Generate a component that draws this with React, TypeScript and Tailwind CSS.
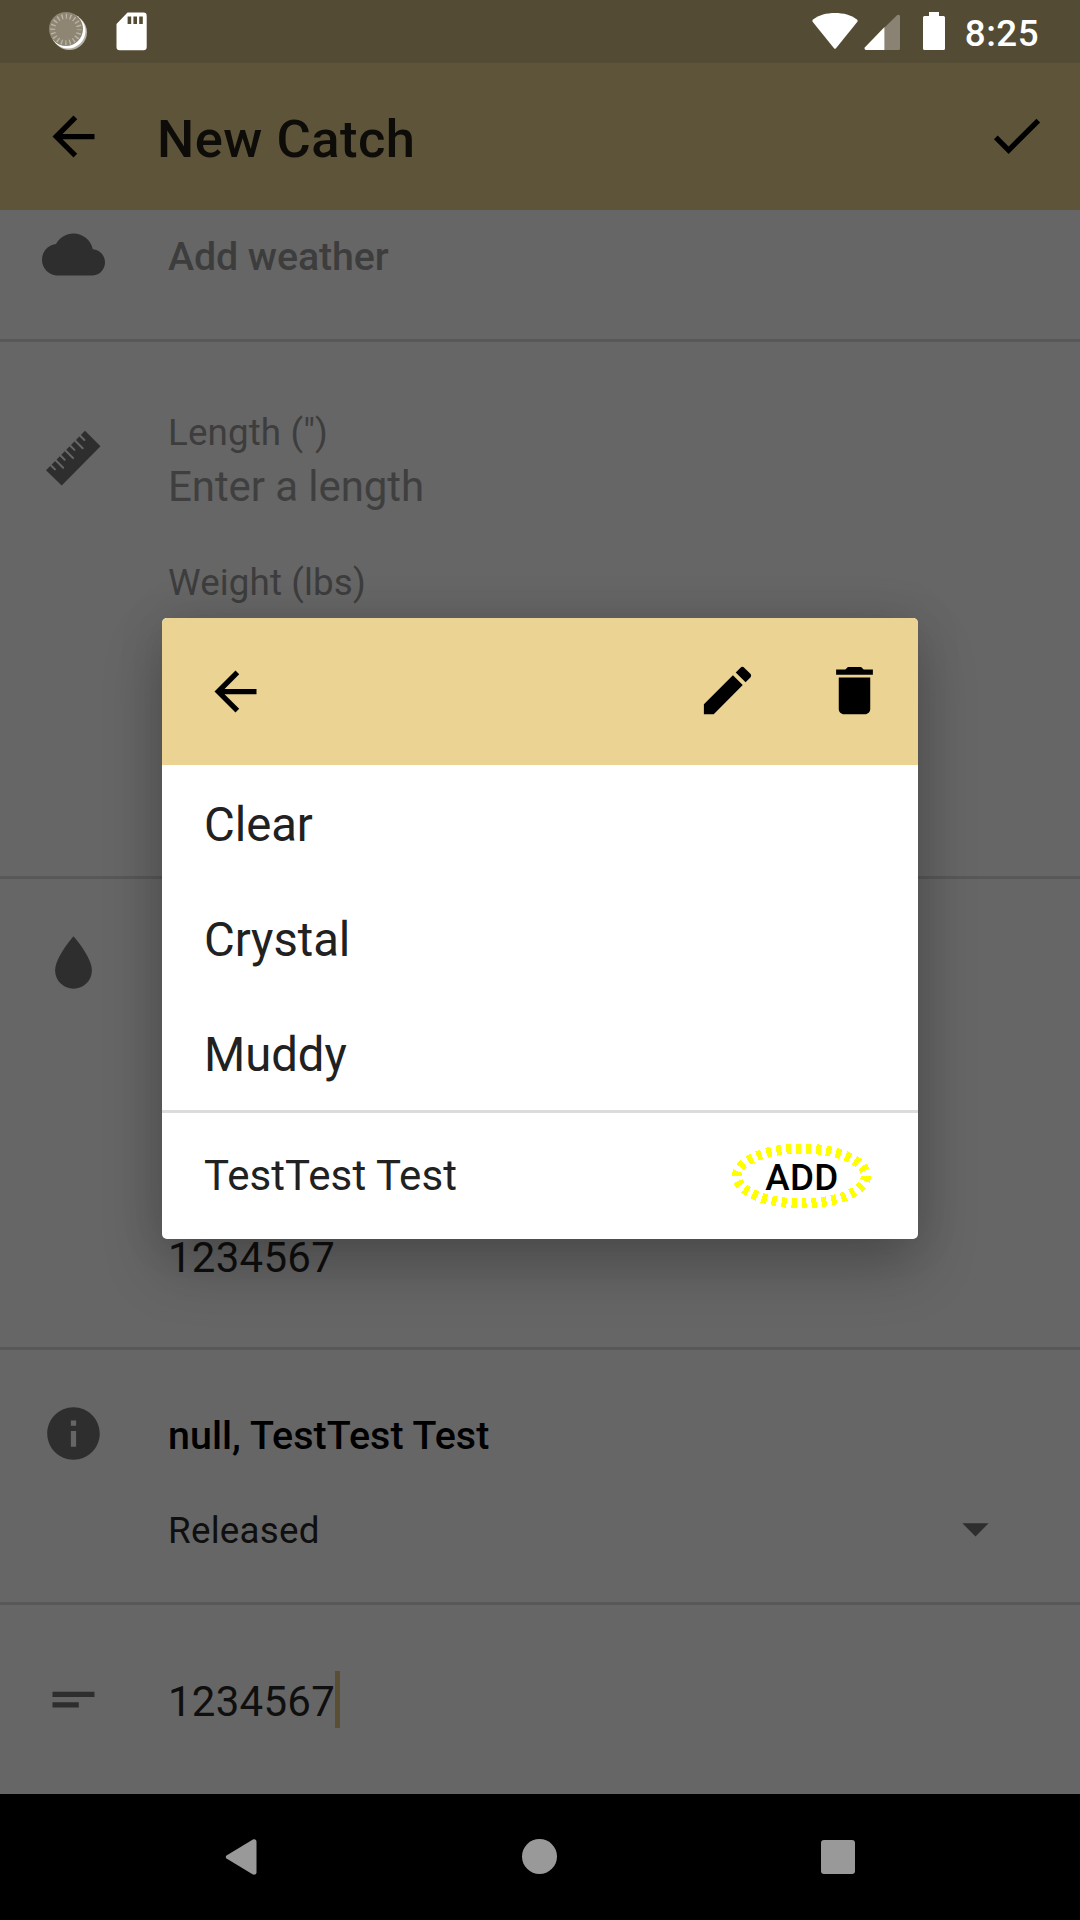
import React from "react";

type IconProps = { d: string; className?: string };

function Icon({ d, className = "" }: IconProps) {
  return (
    <svg viewBox="0 0 24 24" className={`block h-[63px] w-[63px] shrink-0 fill-current ${className}`}>
      <path d={d} />
    </svg>
  );
}

const BACK = "M20 11H7.83l5.59-5.59L12 4l-8 8 8 8 1.41-1.41L7.83 13H20v-2z";
const CHECK = "M9 16.17L4.83 12l-1.42 1.41L9 19 21 7l-1.41-1.41z";
const CLOUD =
  "M19.35 10.04C18.67 6.59 15.64 4 12 4 9.11 4 6.6 5.64 5.35 8.04 2.34 8.36 0 10.91 0 14c0 3.31 2.69 6 6 6h13c2.76 0 5-2.24 5-5 0-2.64-2.05-4.78-4.65-4.96z";
const DROP = "M12 2C12 2 5 9.9 5 15a7 7 0 0 0 14 0C19 9.9 12 2 12 2z";
const INFO = "M12 2C6.48 2 2 6.48 2 12s4.48 10 10 10 10-4.48 10-10S17.52 2 12 2zm1 15h-2v-6h2v6zm0-8h-2V7h2v2z";
const CARET = "M7 10l5 5 5-5z";
const NOTES = "M4 9h16v2H4V9zm0 4h10v2H4v-2z";
const PENCIL =
  "M3 17.25V21h3.75L17.81 9.94l-3.75-3.75L3 17.25zM20.71 7.04c.39-.39.39-1.02 0-1.41l-2.34-2.34c-.39-.39-1.02-.39-1.41 0l-1.83 1.83 3.75 3.75 1.83-1.83z";
const TRASH = "M6 19c0 1.1.9 2 2 2h8c1.1 0 2-.9 2-2V7H6v12zM19 4h-3.5l-1-1h-5l-1 1H5v2h14V4z";

function RulerIcon({ className = "" }: { className?: string }) {
  return (
    <svg viewBox="0 0 63 63" className={`block h-[63px] w-[63px] ${className}`}>
      <path d="M4 44.300L19.700 59.500 58.500 20.300 43 4.700z" fill="currentColor" />
      <path
        d="M7.800 38.200l5.200 5.200M12.700 33.300l8.500 8.500M17.500 28.500l5.200 5.200M22.500 23.500l8.500 8.500M27.300 18.700l5.200 5.200M32.200 13.800l8.500 8.500M37.200 8.800l5.200 5.200"
        fill="none"
        stroke="#666"
        strokeWidth="2"
        strokeLinecap="round"
      />
    </svg>
  );
}

function StatusBar() {
  return (
    <div className="flex h-[63px] items-start bg-[#544b34] text-white">
      <svg viewBox="0 0 40 40" className="ml-[48px] mt-[11px] h-[40px] w-[40px]">
        <circle cx="21.3" cy="21.3" r="17.700" fill="#b5b0a4" />
        <circle cx="20" cy="20" r="17.500" fill="#fff" />
        <circle cx="18" cy="18" r="17" fill="#8e8673" />
        <circle cx="18" cy="18.500" r="13.200" fill="none" stroke="#bab5a8" strokeWidth="5" strokeDasharray="1.3 2.847" strokeDashoffset="0.65" />
      </svg>
      <svg viewBox="0 0 31 39" className="ml-[28px] mt-[12px] h-[39px] w-[31px] fill-white">
        <path
          fillRule="evenodd"
          d="M11.5 .5H27.5a3.2 3.2 0 0 1 3.2 3.2V35a3.2 3.2 0 0 1-3.2 3.2H3.7A3.2 3.2 0 0 1 .5 35V12zM11.6 4.400v7.600h3.600V4.400zm5.800 0v7.600h3.600V4.400zm5.800 0v7.600h3.600V4.400z"
        />
      </svg>
      <div className="flex-1" />
      <svg viewBox="0 0 46 38" className="mt-[12px] h-[38px] w-[46px] fill-white">
        <path d="M1 7.5C7 3 14.500 1 23 1s16 2 22 6.500c.8.800.8 1.700.2 2.600L24 36.300c-.6.700-1.400.7-2 0L.8 10.100C.2 9.200.2 8.300 1 7.500z" />
      </svg>
      <svg viewBox="0 0 36 36" className="ml-[6px] mt-[14px] h-[36px] w-[36px]">
        <path d="M20.500 13.500L33 1.300c1.200-1 3-.5 3 1.200V34.500q0 1.500-1.500 1.500h-14z" fill="#8a8373" />
        <path d="M20.500 13v23H2C.6 36 0 34.300 1 33.200z" fill="#fff" />
      </svg>
      <svg viewBox="0 0 22 38" className="ml-[23px] mt-[12px] h-[38px] w-[22px] fill-white">
        <path d="M6 0h10v4h4.500Q22 4 22 5.500v31Q22 38 20.500 38h-19Q0 38 0 36.500v-31Q0 4 1.500 4H6z" />
      </svg>
      <div className="ml-[20px] mr-[41px] mt-[13px] text-[36.75px] font-medium leading-[42px] tracking-[0.45px]">8:25</div>
    </div>
  );
}

function Toolbar() {
  return (
    <div className="flex h-[147px] items-start bg-[#5e5439] pt-[42px] text-black">
      <Icon d={BACK} className="ml-[42px]" />
      <div className="ml-[52px] mt-[4px] flex-1 text-[52.5px] font-medium leading-[60px] tracking-[0.5px] text-[#0d0c08]">New Catch</div>
      <Icon d={CHECK} className="-mt-px mr-[32px]" />
    </div>
  );
}

function Section({ icon, className, children }: { icon: React.ReactNode; className: string; children?: React.ReactNode }) {
  return (
    <section className={`flex items-start border-[#585858] ${className}`}>
      <div className="w-[168px] shrink-0 pl-[42px] text-[#2e2e2e]">{icon}</div>
      <div className="min-w-0 flex-1">{children}</div>
    </section>
  );
}

function Form() {
  return (
    <main className="h-[1584px] overflow-hidden bg-[#666] text-[#0f0f0f]">
      <Section icon={<Icon d={CLOUD} className="mt-[13px]" />} className="h-[132px] border-b-3">
        <div className="mt-[24px] text-[39.375px] font-medium leading-[46px] tracking-[-0.1px] text-[#3d3d3d]">Add weather</div>
      </Section>
      <Section icon={<RulerIcon className="mt-[84px]" />} className="h-[537px] border-b-3">
        <div className="mt-[70px] text-[36.75px] leading-[42px] tracking-[0.12px] text-[#3d3d3d]">Length (")</div>
        <div className="mt-[8px] text-[42px] leading-[50px] tracking-[-0.08px] text-[#3f3f3f]">Enter a length</div>
        <div className="mt-[50px] text-[36.75px] leading-[42px] tracking-[0.12px] text-[#3d3d3d]">Weight (lbs)</div>
      </Section>
      <Section icon={<Icon d={DROP} className="mt-[52px]" />} className="h-[471px] border-b-3">
        <div className="mt-[354px] text-[42px] leading-[50px] tracking-[0.25px]">1234567</div>
      </Section>
      <Section icon={<Icon d={INFO} className="mt-[52px]" />} className="h-[255px] border-b-3">
        <div className="mt-[63px] text-[39.375px] font-medium leading-[46px] tracking-[0.06px] text-black">null, TestTest Test</div>
        <div className="flex items-start pr-[73px]">
          <div className="mt-[51px] flex-1 text-[36.75px] leading-[42px] tracking-[0.25px]">Released</div>
          <Icon d={CARET} className="mt-[38px] text-[#2e2e2e]" />
        </div>
      </Section>
      <Section icon={<Icon d={NOTES} className="mt-[63px]" />} className="h-[189px]">
        <div className="mt-[66px] flex h-[57px] items-start">
          <div className="mt-[6px] w-[167px] text-[42px] leading-[50px] tracking-[0.25px]">1234567</div>
          <div className="h-full w-[5px] bg-[#5a4f35]" />
        </div>
      </Section>
    </main>
  );
}

function NavBar() {
  return (
    <nav className="flex h-[126px] items-start bg-black pt-[45px]">
      <svg viewBox="0 0 32 36" className="ml-[225px] h-[36px] w-[32px] fill-[#999]">
        <path d="M1.500 16.500L27.500 .8C29.500-.3 31.500.5 31.500 2.800V33.200c0 2.300-2 3.100-4 2L1.500 19.500Q0 18 1.500 16.500z" />
      </svg>
      <div className="ml-[265px] h-[35px] w-[35px] rounded-full bg-[#999]" />
      <div className="ml-[264px] mt-px h-[34px] w-[34px] rounded-[3px] bg-[#999]" />
    </nav>
  );
}

function ClarityDialog() {
  return (
    <div className="absolute left-[162px] top-[618px] w-[756px] overflow-hidden rounded-[5px] bg-white shadow-[0_28px_60px_rgba(0,0,0,0.24),0_0_48px_rgba(0,0,0,0.1)]">
      <div className="flex h-[147px] items-start bg-[#ebd493] pt-[41px] text-black">
        <Icon d={BACK} className="ml-[42px] mt-[1px]" />
        <div className="flex-1" />
        <Icon d={PENCIL} />
        <Icon d={TRASH} className="ml-[64px] mr-[32px]" />
      </div>
      <ul className="border-b-3 border-[#dcdcdc] text-[47.25px] leading-[56px] tracking-[-0.05px] text-[#212121]">
        {["Clear", "Crystal", "Muddy"].map((name) => (
          <li key={name} className="h-[115px] pl-[42px] pt-[32px]">
            {name}
          </li>
        ))}
      </ul>
      <div className="flex h-[126px] items-start pl-[42px] text-[#212121]">
        <div className="mt-[38px] flex-1 text-[42px] leading-[50px] tracking-[0.1px]">TestTest Test</div>
        <div className="relative mr-[46px] mt-[30px] flex h-[66px] w-[140px] justify-center">
          <svg viewBox="0 0 140 66" className="absolute inset-0 h-full w-full" shapeRendering="crispEdges">
            <ellipse cx="69.5" cy="33" rx="64.500" ry="27.500" fill="none" stroke="#ff0" strokeWidth="10" strokeDasharray="5 5" />
          </svg>
          <span className="relative mt-[14px] text-[36.75px] font-medium leading-[42px] tracking-[0.3px] text-black">ADD</span>
        </div>
      </div>
    </div>
  );
}

export default function App() {
  return (
    <div className="relative h-[1920px] w-[1080px] overflow-hidden font-['Roboto',sans-serif]">
      <StatusBar />
      <Toolbar />
      <Form />
      <NavBar />
      <ClarityDialog />
    </div>
  );
}
